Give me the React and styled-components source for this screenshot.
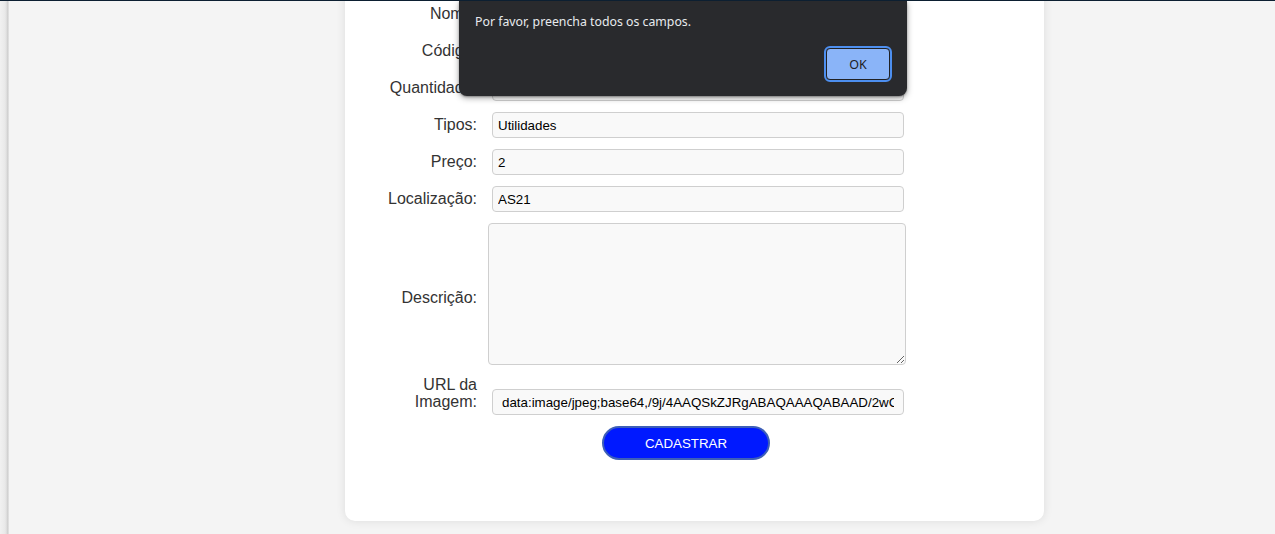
import React from "react";
import styled, { createGlobalStyle } from "styled-components";

const Global = createGlobalStyle`
  html, body { margin: 0; padding: 0; height: 100%; overflow: hidden; }
  body { font-family: "Liberation Sans", Arial, sans-serif; }
`;

const Page = styled.div`
  position: relative;
  min-height: 534px;
  box-sizing: border-box;
  border-top: 1px solid #0c1f31;
  overflow: hidden;
  background: linear-gradient(90deg, #f1f1f1 0, #e9e9e9 5px, #dadada 7px, #c9c9c9 8px, #f4f4f4 9px, #f4f4f4 100%);
  display: flex;
  justify-content: flex-start;
  padding-left: 345px;
  padding-bottom: 13px;
`;

const Card = styled.div`
  width: 699px;
  margin-top: -20px;
  padding: 20px 49px 61px 32px;
  box-sizing: border-box;
  background: #fff;
  border-radius: 10px;
  box-shadow: 0 0 10px rgba(0, 0, 0, 0.1);
`;

const Form = styled.form`
  display: flex;
  flex-direction: column;
  gap: 11px;
`;

const Row = styled.div`
  display: flex;
  align-items: ${(p) => p.$align || "center"};
  gap: 11px;
`;

const Label = styled.label`
  width: 100px;
  flex: none;
  text-align: right;
  font-size: 16px;
  line-height: ${(p) => p.$lh || 18}px;
  color: #333;
  padding-bottom: ${(p) => p.$pb || 0}px;
  padding-top: ${(p) => p.$pt || 0}px;
`;

const Input = styled.input`
  box-sizing: border-box;
  width: 412px;
  height: 26px;
  margin-left: 4px;
  padding: 0 ${(p) => p.$pl || 5}px;
  border: 1px solid #cfcfcf;
  border-radius: 4px;
  background: #f9f9f9;
  font-family: "Liberation Sans", Arial, sans-serif;
  font-size: 13.33px;
  color: #000;
  outline: none;
`;

const TextArea = styled.textarea`
  box-sizing: border-box;
  width: 418px;
  height: 142px;
  border: 1px solid #cfcfcf;
  border-radius: 4px;
  background: #f9f9f9;
  font-family: "Liberation Sans", Arial, sans-serif;
  font-size: 13.33px;
  outline: none;
`;

const SubmitRow = styled.div`
  display: flex;
  justify-content: center;
`;

const Submit = styled.button`
  width: 168px;
  height: 34px;
  border-radius: 17px;
  border: 2px solid #3d5fb8;
  background: #0019ff;
  color: #fff;
  font-family: "Liberation Sans", Arial, sans-serif;
  font-size: 13.33px;
  cursor: pointer;
`;

const Dialog = styled.div`
  position: absolute;
  left: 459px;
  top: 0;
  width: 448px;
  height: 95px;
  box-sizing: border-box;
  background: #292a2d;
  border-radius: 0 0 8px 8px;
  box-shadow: 0 2px 6px rgba(0, 0, 0, 0.35), 0 1px 2px rgba(0, 0, 0, 0.3);
  padding: 12px 16px 16px 16px;
  display: flex;
  flex-direction: column;
  font-family: "Noto Sans", "Open Sans", sans-serif;
`;

const Message = styled.div`
  color: #e8eaed;
  font-size: 12.3px;
  line-height: 18px;
`;

const DialogActions = styled.div`
  margin-top: auto;
  display: flex;
  justify-content: flex-end;
`;

const OkButton = styled.button`
  width: 64px;
  height: 32px;
  box-sizing: border-box;
  border-radius: 4px;
  border: 1px solid #202124;
  outline: 2px solid #4d8ff0;
  outline-offset: 0;
  background: #8ab4f8;
  color: #202124;
  font-family: "Noto Sans", "Open Sans", sans-serif;
  font-size: 12.5px;
  margin-right: 1px;
`;

const fields = [
  { label: "Nome:", value: "" },
  { label: "Código:", value: "" },
  { label: "Quantidade:", value: "" },
  { label: "Tipos:", value: "Utilidades" },
  { label: "Preço:", value: "2" },
  { label: "Localização:", value: "AS21" },
];

export default function App() {
  return (
    <>
      <Global />
      <Page>
        <Card>
          <Form onSubmit={(e) => e.preventDefault()}>
            {fields.map((f) => (
              <Row key={f.label}>
                <Label>{f.label}</Label>
                <Input defaultValue={f.value} />
              </Row>
            ))}
            <Row>
              <Label $pt={8}>Descrição:</Label>
              <TextArea />
            </Row>
            <Row $align="flex-end">
              <Label $lh={17} $pb={5}>URL da Imagem:</Label>
              <Input $pl={9} defaultValue="data:image/jpeg;base64,/9j/4AAQSkZJRgABAQAAAQABAAD/2wCEAAkGBxMTEhUTEhIVFhUXGBgYFxgYGBcYGhgXFxgX" />
            </Row>
            <SubmitRow>
              <Submit type="submit">CADASTRAR</Submit>
            </SubmitRow>
          </Form>
        </Card>
        <Dialog role="alertdialog">
          <Message>Por favor, preencha todos os campos.</Message>
          <DialogActions>
            <OkButton>OK</OkButton>
          </DialogActions>
        </Dialog>
      </Page>
    </>
  );
}
